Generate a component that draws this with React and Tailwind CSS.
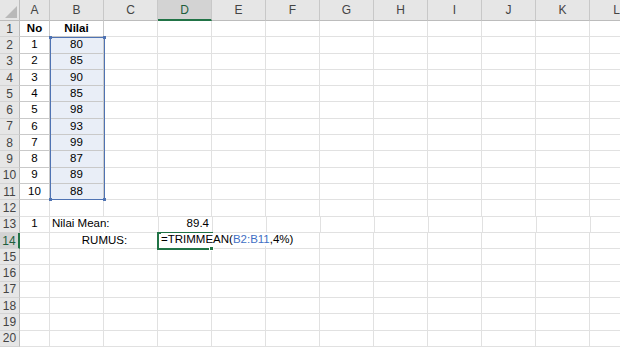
import React from 'react';

const COLS = ['A', 'B', 'C', 'D', 'E', 'F', 'G', 'H', 'I', 'J', 'K', 'L'];
const ROWS = Array.from({ length: 20 }, (_, i) => i + 1);
const colWidth = (c) => (c === 'A' ? 'w-[30px]' : 'w-[54px]');

const nilai = [80, 85, 90, 85, 98, 93, 99, 87, 89, 88];

// cell contents, keyed by address
const cells = { A1: { text: 'No', bold: true }, B1: { text: 'Nilai', bold: true } };
nilai.forEach((n, i) => {
  cells[`A${i + 2}`] = { text: String(i + 1) };
  cells[`B${i + 2}`] = { text: String(n), sel: true };
});
cells.A13 = { text: '1' };
cells.B13 = { text: 'Nilai Mean:', align: 'left', spill: true };
cells.D13 = { text: '89.4', align: 'right' };

function Corner() {
  return (
    <div className="w-[20px] shrink-0 bg-[#e6e6e6] border-r border-b border-[#bcbcbc] flex items-end justify-end p-[2px]">
      <svg width="12" height="12" viewBox="0 0 12 12">
        <polygon points="12,0 12,12 0,12" fill="#b9b9b9" />
      </svg>
    </div>
  );
}

function Cell({ col, row }) {
  const addr = `${col}${row}`;
  const c = cells[addr];
  const table = (col === 'A' || col === 'B') && row <= 11;
  const align = c?.align === 'left' ? 'justify-start pl-[2px]' : c?.align === 'right' ? 'justify-end pr-[3px]' : 'justify-center';
  return (
    <div
      className={`${colWidth(col)} shrink-0 flex items-end pb-[2px] border-b ${c?.spill ? 'border-r-0 mr-px' : 'border-r'} ${table ? 'border-[#c9c9c9]' : 'border-[#e1e1e1]'} ${c?.sel ? 'bg-[#e9eef7]' : ''} ${align}`}
    >
      {c && (
        <span className={`whitespace-nowrap leading-none relative z-20 ${c.bold ? 'font-bold' : ''}`}>{c.text}</span>
      )}
    </div>
  );
}

export default function App() {
  return (
    <div
      className="w-[620px] h-[347px] overflow-hidden bg-white text-[11.5px] text-black relative"
      style={{ fontFamily: '"Liberation Sans", Arial, sans-serif' }}
    >
      {/* column headers */}
      <div className="flex h-[21px]">
        <Corner />
        {COLS.map((c) => (
          <div
            key={c}
            className={`${colWidth(c)} shrink-0 flex items-center justify-center border-r border-[#c8c8c8] text-[12px] ${
              c === 'D' ? 'bg-[#d3d3d3] text-[#1d5e3c] border-b-2 border-b-[#217346]' : 'bg-[#e6e6e6] text-[#444] border-b border-b-[#bcbcbc]'
            }`}
          >
            {c}
          </div>
        ))}
      </div>

      {ROWS.map((r) => (
        <div key={r} className="flex h-[16.3px]">
          <div
            className={`w-[20px] shrink-0 flex items-center justify-center border-b text-[12px] ${
              r === 14
                ? 'bg-[#d3d3d3] text-[#1d5e3c] border-r-2 border-r-[#217346] border-b-[#d4d4d4]'
                : 'bg-[#e6e6e6] text-[#444] border-r border-r-[#bcbcbc] border-b-[#d4d4d4]'
            }`}
          >
            {r}
          </div>
          {r === 14 ? (
            <>
              <Cell col="A" row={14} />
              {/* B14:C14 merged */}
              <div className="w-[108px] shrink-0 flex items-end justify-center pb-[2px] pl-[2px] border-b border-r border-[#e1e1e1]">
                <span className="leading-none">RUMUS:</span>
              </div>
              <div className="w-[54px] shrink-0 flex items-end pl-[3px] pb-[2px] border-b border-[#e1e1e1]">
                <span className="whitespace-nowrap leading-none relative z-20 bg-white py-[1px]">
                  =TRIMMEAN(<span className="text-[#3f6fc4]">B2:B11</span>,4%)
                </span>
              </div>
              {COLS.slice(4).map((c) => (
                <Cell key={c} col={c} row={14} />
              ))}
            </>
          ) : (
            COLS.map((c) => <Cell key={c} col={c} row={r} />)
          )}
        </div>
      ))}

      {/* formula reference highlight B2:B11 */}
      <div className="absolute left-[50px] top-[37px] w-[55px] h-[163px] border border-[#4f73b3] pointer-events-none z-10">
        <div className="absolute -left-[2px] -top-[2px] w-[3px] h-[3px] bg-[#4f73b3]" />
        <div className="absolute -right-[2px] -top-[2px] w-[3px] h-[3px] bg-[#4f73b3]" />
        <div className="absolute -left-[2px] -bottom-[2px] w-[3px] h-[3px] bg-[#4f73b3]" />
        <div className="absolute -right-[2px] -bottom-[2px] w-[3px] h-[3px] bg-[#4f73b3]" />
      </div>

      {/* active cell D14 */}
      <div className="absolute left-[157px] top-[232px] w-[56px] h-[18px] border-2 border-[#217346] pointer-events-none z-10">
        <div className="absolute -right-[3px] -bottom-[3px] w-[5px] h-[5px] bg-[#217346] border border-white" />
      </div>
    </div>
  );
}
